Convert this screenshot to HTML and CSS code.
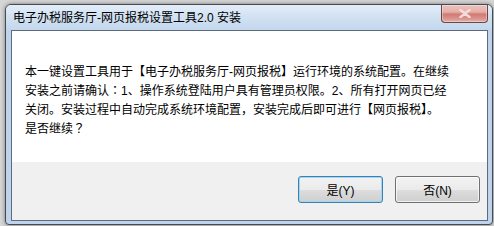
FILE: index.html
```html
<!DOCTYPE html>
<html lang="zh-CN">
<head>
<meta charset="utf-8">
<title>电子办税服务厅-网页报税设置工具2.0 安装</title>
<link rel="stylesheet" href="styles.css">
</head>
<body>
<div class="window">
  <div class="titlebar">
    <span class="title">电子办税服务厅-网页报税设置工具2.0 安装</span>
    <div class="close">
      <svg width="12" height="9" viewBox="0 0 12 9"><path d="M1.5 1 L10.5 8 M10.5 1 L1.5 8" stroke="#f6dcda" stroke-width="2.4" stroke-linecap="round"/></svg>
    </div>
  </div>
  <div class="client">
    <div class="message">
      <p>本一键设置工具用于【电子办税服务厅-网页报税】运行环境的系统配置。在继续<br>安装之前请确认<span class="punct" lang="ja">：</span>1、操作系统登陆用户具有管理员权限。2、所有打开网页已经<br>关闭。安装过程中自动完成系统环境配置<span class="punct" lang="ja">，</span>安装完成后即可进行【网页报税】。<br>是否继续<span class="punct" lang="ja">？</span></p>
    </div>
    <div class="actions">
      <button class="btn btn-default">是(Y)</button>
      <button class="btn">否(N)</button>
    </div>
  </div>
</div>
</body>
</html>
```
FILE: styles.css
```css
html, body {
  margin: 0;
  padding: 0;
}
body {
  background: #d6d6d6;
  width: 494px;
  height: 226px;
  padding: 4px 0 0 5px;
  box-sizing: border-box;
  overflow: hidden;
  font-family: "Liberation Sans", "Noto Sans CJK SC", sans-serif;
  font-size: 12px;
  color: #000;
}
.window {
  width: 488px;
  height: 221px;
  box-sizing: border-box;
  border: 1px solid #464b52;
  border-radius: 6px 6px 4px 4px;
  background: #bfd4ec;
  padding: 0 4px 3px 5px;
  display: flex;
  flex-direction: column;
  box-shadow: 0 0 4px rgba(0,0,0,0.45);
}
.titlebar {
  height: 25px;
  flex: none;
  display: flex;
  justify-content: space-between;
  align-items: flex-start;
  margin: 0 -4px 0 -5px;
  padding: 0 4px 0 7px;
  border-radius: 5px 5px 0 0;
  background: linear-gradient(#e4eef9, #d4e3f3 40%, #c3d7ed);
}
.title {
  line-height: 26px;
  font-size: 12px;
  color: #000;
  white-space: nowrap;
}
.close {
  width: 47px;
  height: 18px;
  box-sizing: border-box;
  border: 1px solid #6b4644;
  border-top: none;
  border-radius: 0 0 4px 4px;
  background: linear-gradient(#ecc2bd 0%, #e5b0aa 40%, #d27a73 55%, #da948d 80%, #e4b0aa 100%);
  display: flex;
  align-items: center;
  justify-content: center;
  box-shadow: inset 0 0 0 1px rgba(255,255,255,0.35);
}
.client {
  flex: 1;
  border: 1px solid #5d6b7e;
  display: flex;
  flex-direction: column;
  background: #f0f0f0;
}
.message {
  height: 131px;
  box-sizing: border-box;
  background: #fff;
  padding: 33px 0 0 13px;
}
.message p {
  margin: 0;
  line-height: 17px;
  white-space: nowrap;
}
.punct {
  font-family: "Noto Sans CJK JP", sans-serif;
}
.actions {
  flex: 1;
  display: flex;
  justify-content: flex-end;
  align-items: flex-start;
  gap: 12px;
  padding: 14px 7px 0 0;
}
.btn {
  width: 85px;
  height: 27px;
  box-sizing: border-box;
  border: 1px solid #707070;
  border-radius: 3px;
  background: linear-gradient(#f2f2f2 0%, #ebebeb 50%, #dddddd 51%, #cfcfcf 100%);
  box-shadow: inset 0 0 0 1px rgba(255,255,255,0.7);
  font-family: "Liberation Sans", "Noto Sans CJK SC", sans-serif;
  font-size: 12px;
  color: #000;
  padding: 0;
}
.btn-default {
  border-color: #3c7fb1;
  box-shadow: inset 0 0 0 1px #9fd6f5;
}
```
